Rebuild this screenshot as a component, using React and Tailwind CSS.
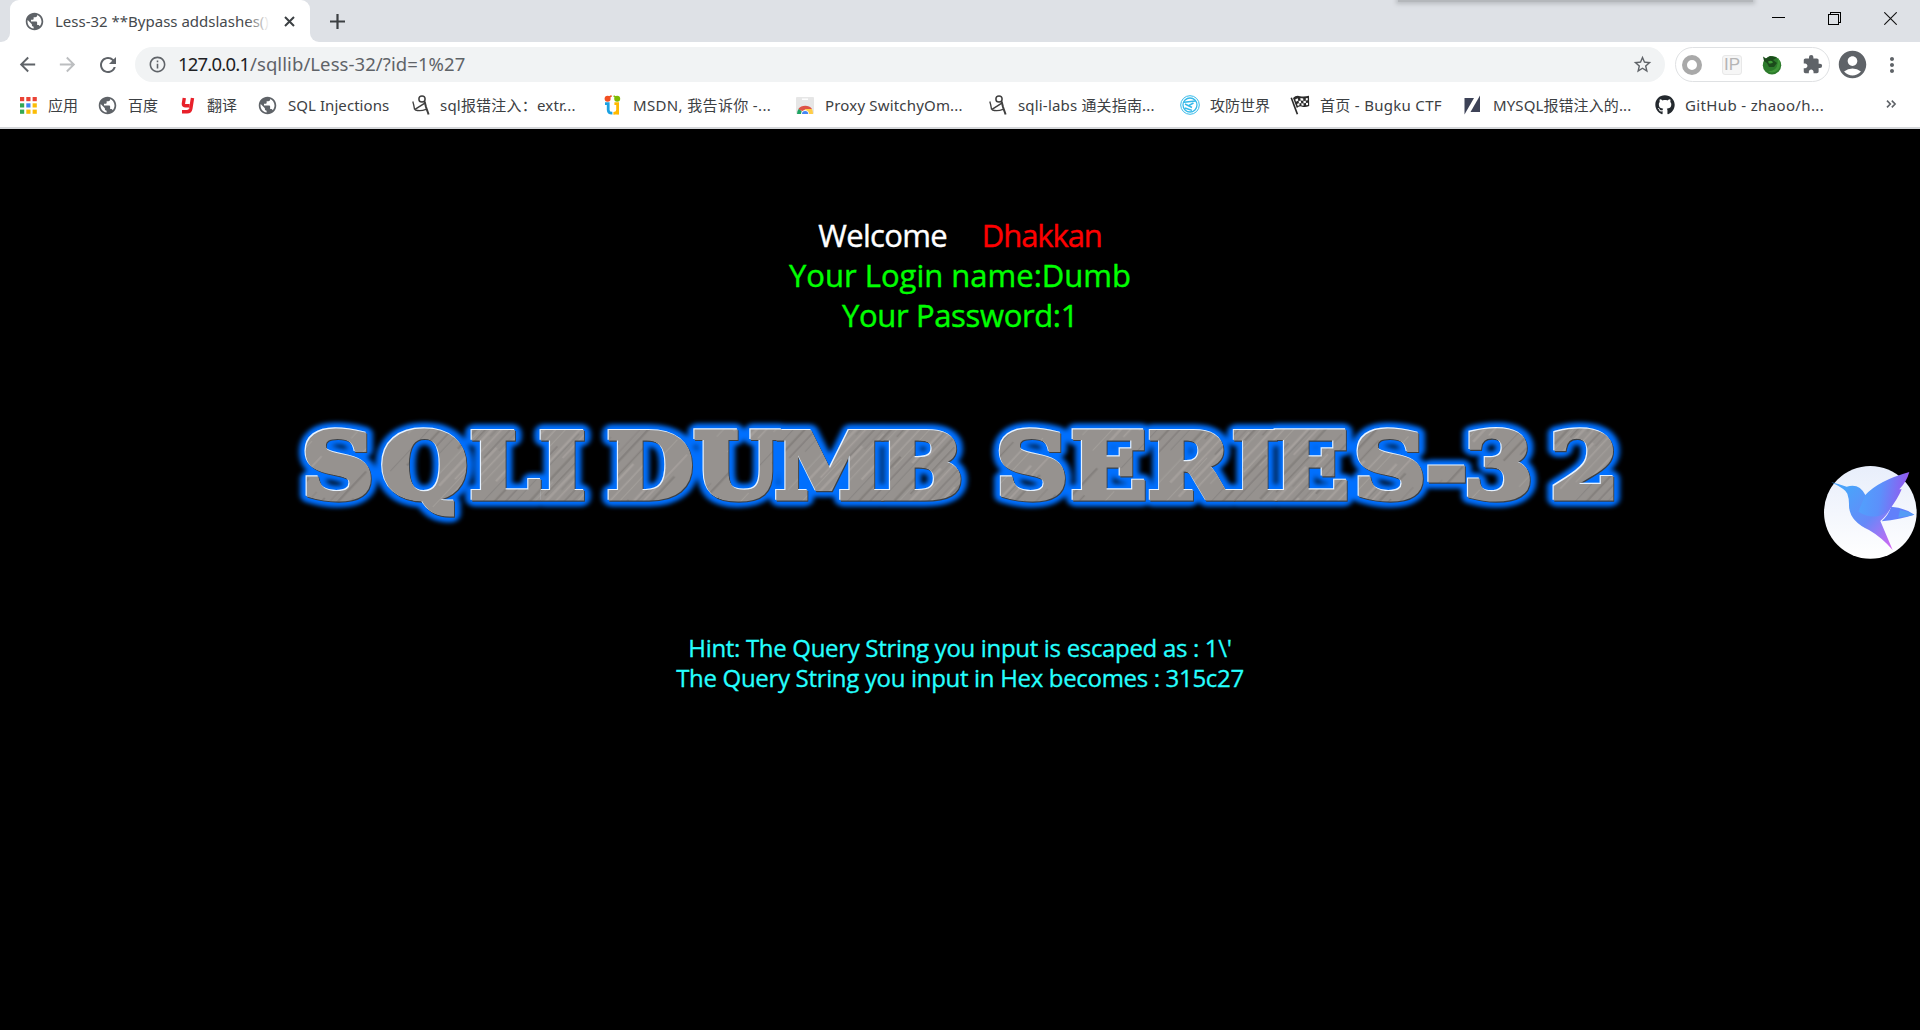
import React from "react";
import {
  MdPublic,
  MdExtension,
  MdAccountCircle,
  MdMoreVert,
  MdStarBorder,
  MdInfoOutline,
  MdArrowBack,
  MdArrowForward,
  MdRefresh,
} from "react-icons/md";
import { FaGithub } from "react-icons/fa";

const UI_FONT = "font-['Noto_Sans','Noto_Sans_CJK_SC',sans-serif]";
const PAGE_FONT = "font-['Open_Sans','Noto_Sans',sans-serif]";

function AppsIcon() {
  const colors = ["#ea4335", "#ea4335", "#ea4335", "#34a853", "#4285f4", "#fbbc05", "#34a853", "#fbbc05", "#fbbc05"];
  return (
    <svg width="17" height="17" viewBox="0 0 17 17">
      {colors.map((c, i) => (
        <rect key={i} x={(i % 3) * 6.3} y={Math.floor(i / 3) * 6.3} width="4.2" height="4.2" fill={c} />
      ))}
    </svg>
  );
}

function GlobeIcon() {
  return <MdPublic className="size-[21px] -ml-[2px] text-[#5f6368]" />;
}

function YoudaoIcon() {
  return (
    <svg width="14" height="17" viewBox="0 0 14 17" fill="none" stroke="#e8202a" strokeWidth="3.4">
      <path d="M3.3 1 L2.4 6.6 Q2.2 8.8 4.6 8.8 L8.6 8.8" />
      <path d="M11.5 1 L9.8 11.6 Q9.2 14.8 6 14.8 L1 14.8" />
    </svg>
  );
}

function StickIcon() {
  return (
    <svg width="18" height="20" viewBox="0 0 18 20" fill="none" stroke="#3f3f3f">
      <circle cx="10" cy="4" r="3.1" strokeWidth="1.5" />
      <path d="M0.8 6.5 Q1.8 9.5 2.6 14.6" strokeWidth="1.3" />
      <path d="M2.6 14.6 L12.8 8.2" strokeWidth="1.5" />
      <path d="M12.6 6.5 L14 12 L16.6 19.5" strokeWidth="2" />
      <path d="M3 14.8 Q8 16.6 14 14.4" strokeWidth="1.3" />
    </svg>
  );
}

function MsdnIcon() {
  return (
    <svg width="17" height="20" viewBox="0 0 17 20" fill="none" strokeWidth="2.8">
      <circle cx="3.6" cy="3.8" r="3" fill="#f25022" />
      <path d="M5 2.2 L7.6 0.8" stroke="#f25022" strokeWidth="1.6" />
      <circle cx="13.2" cy="3.8" r="3" fill="#7fba00" />
      <path d="M11.8 2.2 L9.6 0.8" stroke="#7fba00" strokeWidth="1.6" />
      <path d="M1 8.6 H4.2 V15 Q4.4 18.4 8.4 18.2" stroke="#1ba1e2" />
      <path d="M10.4 8.6 H13.6 V15 Q13.4 18.4 9.4 18.4" stroke="#ffb900" />
      <path d="M13.6 15 V19.6" stroke="#ffb900" />
    </svg>
  );
}

function StoreIcon() {
  return (
    <svg width="18" height="17" viewBox="0 0 18 17">
      <rect width="18" height="17" rx="1" fill="#e6e6e6" />
      <path d="M6 2.2 H12" stroke="#fff" strokeWidth="1.4" />
      <path d="M1 17 A8 8 0 0 1 3 11.4 L8 17 Z" fill="#1da462" />
      <path d="M2.4 12 A8 7 0 0 1 16 12 L9 12.6 L7 14.6 Z" fill="#dd5144" />
      <path d="M9 12 H16 A9 9 0 0 1 17 17 H11 Z" fill="#ffcd46" />
      <path d="M5 17 A4 3.8 0 0 1 13 17 Z" fill="#fff" />
      <path d="M6 17 A3.1 3 0 0 1 12.2 17 Z" fill="#4285f4" />
    </svg>
  );
}

function WorldIcon() {
  return (
    <svg width="20" height="20" viewBox="0 0 20 20" fill="none" stroke="#35b9e9">
      <circle cx="10" cy="10" r="9.3" strokeWidth="1" />
      <circle cx="10" cy="10" r="7" strokeWidth="1.3" />
      <path d="M4 7.2 L15.5 6 M5 9 L12 12.5 M13.5 8 L9 10.4 M5 13 L12 15.4" strokeWidth="1.5" />
    </svg>
  );
}

function FlagIcon() {
  return (
    <svg width="20" height="20" viewBox="0 0 20 20" fill="#2b2b2b">
      <path d="M0.5 3 L2 2.4 L8.2 19 L6.6 19.6 Z" />
      <path d="M3 3 Q6 0 10 1.2 Q14 2.2 19 0.8 L19.2 11 Q15 12.6 11.5 11.4 Q9 10.8 6.8 13 Z" />
      <path
        d="M5.2 4.4 l2.4-1.2 .8 2.4 -2.4 1.1z M10.4 3 l2.8.4 .2 2.4 -2.8-.3z M15.8 3.3 l1.9-.3 .1 2.3 -2 .3z M8.6 6 l2.2-.4 .4 2.4 -2.2.4z M13.4 6 l2.4-.2 .1 2.3 -2.4.2z M7 9 l2-1 .7 2.1 -1.9.9z M11.3 8.2 l2.2.2 .1 2.3 -2.1-.3z M16 8.1 l2-.4 0 2.2 -1.9.4z"
        fill="#fff"
      />
    </svg>
  );
}

function SlashIcon() {
  return (
    <svg width="17" height="20" viewBox="0 0 17 20" fill="#3d4257">
      <path d="M0.5 3 H10 L0.5 19.5 Z" />
      <path d="M16 0.5 V17 H6.5 Z" />
    </svg>
  );
}

const bookmarks = [
  { icon: AppsIcon, label: "应用", item: "w-[79px]", box: "w-[28px]", track: "" },
  { icon: GlobeIcon, label: "百度", item: "w-[82px]", box: "w-[29px]", track: "" },
  { icon: YoudaoIcon, label: "翻译", item: "w-[78px]", box: "w-[26px]", track: "" },
  { icon: GlobeIcon, label: "SQL Injections", item: "w-[153px]", box: "w-[29px]", track: "tracking-[0.06px]" },
  { icon: StickIcon, label: "sql报错注入：extr...", item: "w-[192px]", box: "w-[28px]", track: "tracking-[0.2px]" },
  { icon: MsdnIcon, label: "MSDN, 我告诉你 -...", item: "w-[192px]", box: "w-[29px]", track: "tracking-[0.35px]" },
  { icon: StoreIcon, label: "Proxy SwitchyOm...", item: "w-[193px]", box: "w-[29px]", track: "tracking-[0.18px]" },
  { icon: StickIcon, label: "sqli-labs 通关指南...", item: "w-[191px]", box: "w-[29px]", track: "tracking-[0.18px]" },
  { icon: WorldIcon, label: "攻防世界", item: "w-[110px]", box: "w-[30px]", track: "" },
  { icon: FlagIcon, label: "首页 - Bugku CTF", item: "w-[174px]", box: "w-[30px]", track: "tracking-[0.3px]" },
  { icon: SlashIcon, label: "MYSQL报错注入的...", item: "w-[191px]", box: "w-[29px]", track: "tracking-[0.1px]" },
  { icon: () => <FaGithub className="size-5 text-[#24292e]" />, label: "GitHub - zhaoo/h...", item: "w-[179px]", box: "w-[30px]", track: "tracking-[0.36px]" },
];

function TabStrip() {
  return (
    <div className="relative flex h-[42px] bg-[#dee1e6]">
      <div className="absolute left-[1398px] top-0 h-[2px] w-[355px] bg-[#b4b7bb] shadow-[0_0_4px_2px_#b9bcc0]" />
      <div className="flex w-[10px] bg-white">
        <div className="flex-1 rounded-br-[9px] bg-[#dee1e6]" />
      </div>
      <div className="flex w-[300px] items-center rounded-t-[9px] bg-white pl-[14px]">
        <MdPublic className="size-[21px] shrink-0 text-[#5f6368]" />
        <div className="relative ml-[10px] w-[225px] whitespace-nowrap text-[15px] leading-[22px] text-[#45494d]">
          Less-32 **Bypass addslashes()*
          <div className="absolute inset-y-0 right-0 w-[34px] bg-linear-to-r from-white/0 to-white to-70%" />
        </div>
        <svg className="ml-[4px] shrink-0" width="11" height="11" viewBox="0 0 11 11" stroke="#3c4043" strokeWidth="2">
          <path d="M1 1 L10 10 M10 1 L1 10" />
        </svg>
      </div>
      <div className="flex w-[40px] bg-white">
        <div className="flex flex-1 items-center rounded-bl-[9px] bg-[#dee1e6] pl-[20px]">
          <svg className="shrink-0" width="15" height="15" viewBox="0 0 15 15" stroke="#3c4043" strokeWidth="2.2">
            <path d="M7.5 0 V15 M0 7.5 H15" />
          </svg>
        </div>
      </div>
      <div className="ml-auto flex items-start gap-[43px] pr-[23px] pt-[12px]">
        <svg width="13" height="13" viewBox="0 0 13 13" fill="none" stroke="#000" shapeRendering="crispEdges">
          <path d="M0 5.5 H13" />
        </svg>
        <svg width="13" height="13" viewBox="0 0 13 13" fill="none" stroke="#000" shapeRendering="crispEdges">
          <path d="M0.5 2.5 H10.5 V12.5 H0.5 Z M2.5 2.5 V0.5 H12.5 V10.5 H10.5" />
        </svg>
        <svg width="13" height="13" viewBox="0 0 13 13" fill="none" stroke="#111" strokeWidth="1.1">
          <path d="M0.3 0.3 L12.7 12.7 M12.7 0.3 L0.3 12.7" />
        </svg>
      </div>
    </div>
  );
}

function FirefoxLikeIcon() {
  return (
    <svg width="20" height="20" viewBox="0 0 20 20">
      <circle cx="10" cy="10.2" r="9.2" fill="#2c7a2b" />
      <path d="M1 1.5 L4 3.5 L8 1 L15 2.5 L11 5 L15 8 L12 12 L7 12 L5 8 L2 6 Z" fill="#1b4a1b" />
      <path d="M6 6.5 Q10 4.5 11 7.5 Q9 9 7 8.4 Z" fill="#3e9a38" />
      <path d="M16 3 Q20 9 16.5 14.5 Q12 19 6 16.5 Q15 16 15.5 9 Z" fill="#3f9638" />
    </svg>
  );
}

function Toolbar() {
  return (
    <div className="flex h-[45px] items-center">
      <div className="flex w-[135px] items-center gap-[17px] pl-[16px] text-[#5f6368]">
        <MdArrowBack className="size-[23px] shrink-0" />
        <MdArrowForward className="size-[23px] shrink-0 text-[#bcbec0]" />
        <MdRefresh className="size-[24px] shrink-0" />
      </div>
      <div className="flex h-[35px] w-[1530px] items-center rounded-full bg-[#f1f3f4] pl-[13px] pr-[12px]">
        <MdInfoOutline className="size-[19px] text-[#5f6368]" />
        <div className="ml-[11px] flex pb-px text-[18.5px] leading-[28px]">
          <span className="w-[72px] tracking-[-0.8px] text-[#202124]">127.0.0.1</span>
          <span className="tracking-[0.08px] text-[#5f6368]">/sqllib/Less-32/?id=1%27</span>
        </div>
        <MdStarBorder className="ml-auto size-[21px] text-[#5f6368]" />
      </div>
      <div className="ml-[10px] flex h-[35px] w-[155px] items-center rounded-full border border-[#dfe1e3] pl-[6px]">
        <div className="size-[20px] rounded-full border-[5px] border-[#a9a9a9]" />
        <div className="ml-[20px] flex size-[20px] items-center justify-center rounded-[3px] border border-[#e8e8e8] bg-[#f6f6f6] font-['Liberation_Sans',sans-serif] text-[17px] text-[#b5b5b5]">
          IP
        </div>
        <div className="ml-[20px]">
          <FirefoxLikeIcon />
        </div>
        <MdExtension className="ml-[20px] size-[21px] text-[#5f6368]" />
      </div>
      <MdAccountCircle className="ml-[6px] size-[33px] shrink-0 text-[#5f6368]" />
      <MdMoreVert className="ml-[11px] size-[24px] shrink-0 text-[#5f6368]" />
    </div>
  );
}

function BookmarksBar() {
  return (
    <div className="flex h-[42px] items-center border-b-2 border-[#d5d7da] pb-[4px] pl-[20px] text-[15px] leading-[22px] text-[#3c4043]">
      {bookmarks.map(({ icon: Icon, label, item, box, track }) => (
        <div key={label} className={`flex shrink-0 items-center whitespace-nowrap ${item}`}>
          <div className={`shrink-0 ${box}`}>
            <Icon />
          </div>
          <span className={track}>{label}</span>
        </div>
      ))}
      <svg className="ml-[52px] -mt-[2px]" width="11" height="8" viewBox="0 0 11 8" fill="none" stroke="#5f6368" strokeWidth="1.6">
        <path d="M1 0.6 L4.3 4 L1 7.4 M5.8 0.6 L9.1 4 L5.8 7.4" />
      </svg>
    </div>
  );
}

const STRETCH = 1.12;
const words = [
  { text: "SQLI", xs: [302, 381, 470, 539] },
  { text: "DUMB", xs: [607, 694, 775, 879] },
  { text: "SERIES-32", xs: [996, 1071, 1148, 1232, 1273, 1354, 1426, 1464, 1550] },
];

function BannerText(props) {
  return (
    <g {...props}>
      {words.map((w) => (
        <text key={w.text} y="98" x={w.xs.map((x) => ((x - 290) / STRETCH).toFixed(1)).join(" ")}>
          {w.text}
        </text>
      ))}
    </g>
  );
}

function Banner() {
  return (
    <svg
      width="1340"
      height="140"
      viewBox="0 0 1340 140"
      className="font-['DejaVu_Serif',serif] text-[89px] font-bold"
      strokeLinejoin="round"
    >
      <defs>
        <pattern id="steel" width="211" height="83" patternUnits="userSpaceOnUse" patternTransform="rotate(-50)">
          <rect width="211" height="83" fill="#96928f" />
          {[0, 3, 5, 9, 12, 14, 19, 23, 26, 31, 34, 38, 41, 46, 50, 53, 57, 62, 66, 69, 73, 77, 80].map((y, i) => (
            <rect
              key={y}
              x={(i * 67) % 120}
              y={y}
              width={60 + ((i * 29) % 50)}
              height={0.8 + (i % 3) * 0.7}
              fill={i % 2 ? "#74706e" : "#b3aeaa"}
              opacity="0.5"
            />
          ))}
        </pattern>
        <filter id="halo" x="-5%" y="-20%" width="110%" height="140%">
          <feGaussianBlur stdDeviation="2.2" />
        </filter>
      </defs>
      <g transform={`scale(${STRETCH} 1)`}>
        <BannerText fill="#0070ff" stroke="#0070ff" strokeWidth="17" filter="url(#halo)" />
        <BannerText fill="#3b4046" stroke="#3b4046" strokeWidth="5.5" strokeLinejoin="miter" transform="translate(0.7 0.7)" />
        <BannerText fill="#e6f2ff" stroke="#e6f2ff" strokeWidth="5.5" strokeLinejoin="miter" transform="translate(-0.8 -0.8)" />
        <BannerText fill="url(#steel)" stroke="url(#steel)" strokeWidth="5.2" strokeLinejoin="miter" />
      </g>
    </svg>
  );
}

function BirdBadge() {
  return (
    <svg className="absolute left-[1800px] top-[450px]" width="120" height="120" viewBox="0 0 360 360">
      <defs>
        <linearGradient id="disc" x1="0" y1="0" x2="0" y2="1">
          <stop offset="0" stopColor="#e8eefb" />
          <stop offset="1" stopColor="#ffffff" />
        </linearGradient>
        <linearGradient id="body" gradientUnits="userSpaceOnUse" x1="130" y1="130" x2="290" y2="280">
          <stop offset="0" stopColor="#4ba3fb" />
          <stop offset="0.5" stopColor="#6688f8" />
          <stop offset="1" stopColor="#d566f2" />
        </linearGradient>
        <linearGradient id="wing" gradientUnits="userSpaceOnUse" x1="170" y1="130" x2="310" y2="150">
          <stop offset="0" stopColor="#4fa4fd" />
          <stop offset="0.5" stopColor="#5c90fb" />
          <stop offset="1" stopColor="#8f5cf0" />
        </linearGradient>
      </defs>
      <circle cx="211" cy="187" r="139" fill="url(#disc)" />
      <path d="M245 214 Q268 192 273 170 Q310 172 343 194 Q300 208 245 214 Z" fill="#6180fa" />
      <path d="M300 180 Q325 184 343 194 Q320 200 295 202 Z" fill="#559cf6" />
      <path
        d="M94 97 Q120 103 140 110 Q178 98 196 135 Q250 130 275 168 Q262 196 241 213 L278 300 Q245 262 207 240 Q145 212 147 162 Q147 145 142 131 Q137 118 94 97 Z"
        fill="url(#body)"
      />
      <path d="M196 135 Q235 92 328 66 Q320 95 298 118 L305 118 Q292 150 264 184 Q225 215 175 185 Z" fill="url(#wing)" />
    </svg>
  );
}

export default function App() {
  return (
    <div className={`relative flex h-[1030px] w-[1920px] flex-col overflow-hidden bg-white ${UI_FONT}`}>
      <TabStrip />
      <Toolbar />
      <BookmarksBar />
      <main className={`flex flex-1 flex-col items-center bg-black pt-[86px] ${PAGE_FONT}`}>
        <div className="flex flex-col items-center whitespace-pre text-[31px] leading-[40px] text-[#00ff00] [-webkit-text-stroke:0.4px]">
          <div className="flex gap-[35px]">
            <span className="tracking-[-0.7px] text-white">Welcome</span>
            <span className="tracking-[-1.1px] text-[#ff0000]">Dhakkan</span>
          </div>
          <div>Your Login name:Dumb</div>
          <div className="tracking-[-0.35px]">Your Password:1</div>
        </div>
        <div className="mt-[65px]">
          <Banner />
        </div>
        <div className="mt-[93px] flex flex-col items-center whitespace-nowrap text-[24px] leading-[30px] tracking-[-0.32px] text-[#26ffff] [-webkit-text-stroke:0.3px]">
          <div>Hint: The Query String you input is escaped as : 1\'</div>
          <div>The Query String you input in Hex becomes : 315c27</div>
        </div>
      </main>
      <BirdBadge />
    </div>
  );
}
